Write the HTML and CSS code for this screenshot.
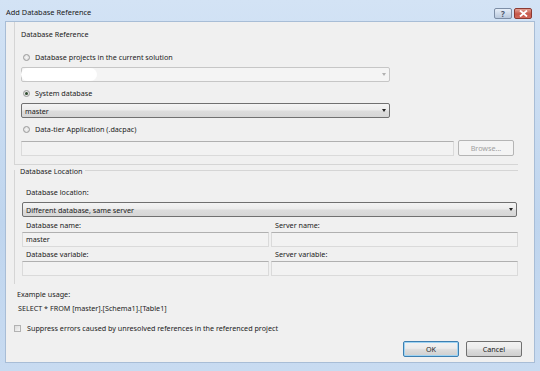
FILE: index.html
```html
<!DOCTYPE html>
<html lang="en">
<head>
    <meta charset="UTF-8">
    <title>Add Database Reference</title>
    <link rel="stylesheet" href="styles.css">
</head>
<body>
    <div class="window">
        <div class="titlebar">
            <span class="title">Add Database Reference</span>
            <div class="caption-buttons">
                <span class="cap-btn help">?</span>
                <span class="cap-btn close">
                    <svg width="9" height="7" viewBox="0 0 9 7"><path d="M1 0.5 L8 6.5 M8 0.5 L1 6.5" stroke="#fff" stroke-width="1.8"/></svg>
                </span>
            </div>
        </div>

        <div class="client">
            <div class="group ref-group">
                <div class="group-label">Database Reference</div>

                <div class="radio-row first">
                    <span class="radio"></span>
                    <span>Database projects in the current solution</span>
                </div>
                <div class="combo disabled">
                    <span class="redact"></span>
                    <span class="arrow"></span>
                </div>

                <div class="radio-row">
                    <span class="radio checked"></span>
                    <span>System database</span>
                </div>
                <div class="combo">
                    <span class="combo-text">master</span>
                    <span class="arrow"></span>
                </div>

                <div class="radio-row">
                    <span class="radio"></span>
                    <span>Data-tier Application (.dacpac)</span>
                </div>
                <div class="file-row">
                    <div class="textbox file-box"></div>
                    <button class="btn disabled-btn" disabled>Browse...</button>
                </div>
            </div>

            <div class="group loc-group">
                <div class="legend-row">
                    <span class="legend">Database Location</span>
                    <span class="legend-line"></span>
                </div>

                <div class="field-label loc-label">Database location:</div>
                <div class="combo wide">
                    <span class="combo-text focus">Different database, same server</span>
                    <span class="arrow"></span>
                </div>

                <div class="columns">
                    <div class="column">
                        <div class="field-label">Database name:</div>
                        <div class="textbox">master</div>
                        <div class="field-label">Database variable:</div>
                        <div class="textbox"></div>
                    </div>
                    <div class="column">
                        <div class="field-label">Server name:</div>
                        <div class="textbox"></div>
                        <div class="field-label">Server variable:</div>
                        <div class="textbox"></div>
                    </div>
                </div>
            </div>

            <div class="usage">
                <div class="usage-title">Example usage:</div>
                <div class="usage-code">SELECT * FROM [master].[Schema1].[Table1]</div>
            </div>

            <div class="check-row">
                <span class="checkbox"></span>
                <span>Suppress errors caused by unresolved references in the referenced project</span>
            </div>

            <div class="button-row">
                <button class="btn default">OK</button>
                <button class="btn">Cancel</button>
            </div>
        </div>
    </div>
</body>
</html>
```

FILE: styles.css
```css
:root {
    --client-bg: #f0f0f0;
    --text-color: #1b1b1b;
    --line-color: #d5d5d5;
}

body {
    margin: 0;
    font-family: 'Noto Sans', sans-serif;
    font-size: 7.2px;
    color: var(--text-color);
    background-color: #ffffff;
}

.window {
    width: 540px;
    height: 371px;
    box-sizing: border-box;
    padding: 2px 5px 8px 5px;
    background: linear-gradient(to bottom, #d3e3f5 0%, #bfd5ee 60%, #c8dbf1 100%);
    display: flex;
    flex-direction: column;
}

.titlebar {
    height: 19px;
    display: flex;
    align-items: center;
    justify-content: space-between;
}

.title {
    margin-left: 1px;
    font-size: 7.4px;
    color: #202020;
}

.caption-buttons {
    display: flex;
    gap: 2px;
    margin-right: 3px;
    margin-top: 3px;
}

.cap-btn {
    width: 18px;
    height: 11px;
    border: 1px solid #7d8ea6;
    border-radius: 2px;
    box-sizing: border-box;
    display: flex;
    align-items: center;
    justify-content: center;
}

.help {
    background: linear-gradient(to bottom, #e6eef8, #b9c9dd);
    font-size: 8px;
    font-weight: bold;
    color: #4a5568;
}

.close {
    background: linear-gradient(to bottom, #e4a194, #c6584a 55%, #d2685a);
    border-color: #8c3a32;
}

.client {
    flex: 1;
    background-color: var(--client-bg);
    border: 1px solid #a8bdd6;
    padding: 0 12px 0 8px;
    display: flex;
    flex-direction: column;
}

.group {
    border-left: 1px solid var(--line-color);
}

.ref-group {
    padding: 5px 0 8px 6px;
    border-bottom: 1px solid var(--line-color);
    margin-right: 4px;
}

.group-label {
    height: 14px;
    line-height: 14px;
}

.radio-row {
    height: 14px;
    margin-top: 4px;
    display: flex;
    align-items: center;
    gap: 5px;
    padding-left: 2px;
}

.radio-row.first {
    margin-top: 9px;
}

.radio {
    width: 7px;
    height: 7px;
    border: 1px solid #9a9a9a;
    border-radius: 50%;
    box-sizing: border-box;
    background: radial-gradient(circle, #f6f6f6, #d8d8d8);
    display: flex;
    align-items: center;
    justify-content: center;
}

.radio.checked::after {
    content: "";
    width: 3px;
    height: 3px;
    border-radius: 50%;
    background-color: #2d4a2d;
}

.combo {
    width: 369px;
    height: 15px;
    margin-top: 3px;
    box-sizing: border-box;
    border: 1px solid #707070;
    border-radius: 2px;
    background: linear-gradient(to bottom, #f4f4f4 0%, #ececec 45%, #dcdcdc 55%, #d6d6d6 100%);
    display: flex;
    align-items: center;
    justify-content: space-between;
    padding: 0 3px 0 2px;
}

.combo.disabled {
    border-color: #c6c6c6;
    background: #f4f4f4;
}

.combo.wide {
    width: 495px;
    margin-top: 3px;
}

.combo-text {
    padding: 0 1px;
}

.combo-text.focus {
    flex: 1;
    margin-right: 6px;
}

.redact {
    width: 76px;
    height: 13px;
    margin-left: -3px;
    border-radius: 7px;
    background-color: #ffffff;
}

.arrow {
    width: 0;
    height: 0;
    border-left: 2.5px solid transparent;
    border-right: 2.5px solid transparent;
    border-top: 3px solid #222222;
}

.combo.disabled .arrow {
    border-top-color: #b0b0b0;
}

.file-row {
    margin-top: 4px;
    display: flex;
    align-items: center;
    gap: 4px;
}

.file-box {
    width: 433px;
    height: 15px;
}

.textbox {
    height: 15px;
    box-sizing: border-box;
    border: 1px solid #dadada;
    border-top-color: #b0b0b0;
    background-color: #f2f2f2;
    padding-left: 3px;
    line-height: 13px;
}

.btn {
    width: 56px;
    height: 16px;
    padding: 0;
    font-family: 'Noto Sans', sans-serif;
    font-size: 7.2px;
    color: var(--text-color);
    border: 1px solid #707070;
    border-radius: 2px;
    background: linear-gradient(to bottom, #f2f2f2 0%, #ebebeb 45%, #dddddd 55%, #cfcfcf 100%);
}

.disabled-btn {
    border-color: #b5b5b5;
    background: #f4f4f4;
    color: #a0a0a0;
}

.loc-group {
    margin-top: 5px;
    padding: 0 0 8px 7px;
    margin-right: 4px;
}

.legend-row {
    height: 1px;
    display: flex;
    align-items: center;
    margin-left: -7px;
}

.legend {
    padding: 0 2px 0 5px;
    background-color: var(--client-bg);
}

.legend-line {
    flex: 1;
    height: 1px;
    background-color: var(--line-color);
}

.field-label {
    height: 14px;
    line-height: 14px;
}

.loc-label {
    margin-top: 14px;
    padding-left: 4px;
}

.columns {
    display: flex;
    gap: 2px;
    margin-top: 1px;
}

.column {
    width: 247px;
    display: flex;
    flex-direction: column;
}

.column .field-label {
    padding-left: 4px;
}

.usage {
    margin-top: 3px;
    padding-left: 3px;
}

.usage-title,
.usage-code {
    height: 14px;
    line-height: 14px;
}

.usage-code {
    padding-left: 1px;
}

.check-row {
    margin-top: 6px;
    height: 14px;
    display: flex;
    align-items: center;
    gap: 6px;
}

.checkbox {
    width: 7px;
    height: 7px;
    box-sizing: border-box;
    border: 1px solid #b2b2b2;
    background: linear-gradient(135deg, #dcdcdc, #f6f6f6);
}

.button-row {
    margin-top: 6px;
    display: flex;
    justify-content: flex-end;
    gap: 7px;
}

.btn.default {
    border-color: #3c7fb1;
    box-shadow: inset 0 0 0 1px #9fd3f2;
}
```
